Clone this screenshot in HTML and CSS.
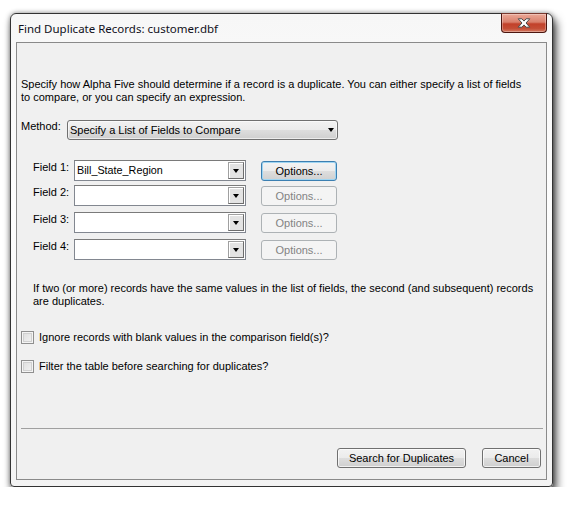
FILE: index.html
```html
<!DOCTYPE html>
<html>
<head>
<meta charset="utf-8">
<link rel="stylesheet" href="styles.css">
</head>
<body>
<div class="window">
  <div class="titlebar">
    <span class="title">Find Duplicate Records: customer.dbf</span>
    <div class="close">
      <svg width="14" height="10" viewBox="0 0 14 10"><path d="M1.2 0.8 H4.9 L7 3.1 L9.1 0.8 H12.8 L9 5 L12.8 9.2 H9.1 L7 6.9 L4.9 9.2 H1.2 L5 5 Z" fill="#ffffff" stroke="#4a4a4a" stroke-width="1" stroke-linejoin="round"/></svg>
    </div>
  </div>
  <div class="client">
    <p class="intro">Specify how Alpha Five should determine if a record is a duplicate. You can either specify a list of fields<br>to compare, or you can specify an expression.</p>
    <div class="method-row">
      <span class="mlbl">Method:</span>
      <div class="select"><span class="sval">Specify a List of Fields to Compare</span><span class="caret"></span></div>
    </div>
    <div class="fields">
      <div class="field-row r1">
        <span class="flbl">Field 1:</span>
        <div class="combo"><span class="val">Bill_State_Region</span><span class="cbtn"><span class="tri"></span></span></div>
        <div class="btn opt default">Options...</div>
      </div>
      <div class="field-row r2">
        <span class="flbl">Field 2:</span>
        <div class="combo"><span class="val"></span><span class="cbtn"><span class="tri"></span></span></div>
        <div class="btn opt disabled">Options...</div>
      </div>
      <div class="field-row r3">
        <span class="flbl">Field 3:</span>
        <div class="combo"><span class="val"></span><span class="cbtn"><span class="tri"></span></span></div>
        <div class="btn opt disabled">Options...</div>
      </div>
      <div class="field-row r4">
        <span class="flbl">Field 4:</span>
        <div class="combo"><span class="val"></span><span class="cbtn"><span class="tri"></span></span></div>
        <div class="btn opt disabled">Options...</div>
      </div>
    </div>
    <p class="note">If two (or more) records have the same values in the list of fields, the second (and subsequent) records<br>are duplicates.</p>
    <div class="check c1"><span class="box"></span><span>Ignore records with blank values in the comparison field(s)?</span></div>
    <div class="check c2"><span class="box"></span><span>Filter the table before searching for duplicates?</span></div>
    <div class="sep"></div>
    <div class="actions">
      <div class="btn search">Search for Duplicates</div>
      <div class="btn cancel">Cancel</div>
    </div>
  </div>
</div>
</body>
</html>
```
FILE: styles.css
```css
* { box-sizing: border-box; }
html, body { margin: 0; padding: 0; background: #ffffff; }
body {
  font-family: "Liberation Sans", Arial, sans-serif;
  font-size: 11px;
  color: #000;
  padding: 13px 0 0 10px;
}
.window {
  width: 543px;
  height: 474px;
  border: 1px solid #333333;
  border-radius: 6px 6px 4px 4px;
  background: linear-gradient(180deg, #f7f7f7 0%, #fdfdfd 40%, #f3f3f3 100%);
  box-shadow: 3px 6px 10px rgba(0,0,0,0.75), 0 0 5px rgba(0,0,0,0.4);
  padding: 0 5px 6px 5px;
  display: flex;
  flex-direction: column;
}
.titlebar {
  height: 28px;
  display: flex;
  justify-content: space-between;
  align-items: flex-start;
}
.title {
  font-family: "Noto Sans", "Open Sans", sans-serif;
  font-size: 11.5px;
  color: #101020;
  margin: 7px 0 0 2px;
}
.close {
  width: 46px;
  height: 20px;
  margin-top: -1px;
  border: 1px solid #4b1610;
  border-top-color: #7a3a30;
  border-radius: 0 0 4px 4px;
  background: linear-gradient(180deg, #eba897 0%, #d9806c 45%, #c2412a 55%, #c44d35 80%, #d47a62 100%);
  box-shadow: inset 0 0 0 1px rgba(255,255,255,0.3);
  display: flex;
  align-items: center;
  justify-content: center;
}
.close svg { display: block; }
.client {
  flex: 1;
  border: 1px solid #8a8a8a;
  background: #f0f0f0;
  display: flex;
  flex-direction: column;
}
p { margin: 0; }
.intro {
  margin: 35px 0 0 4px;
  line-height: 13px;
}
.method-row {
  display: flex;
  margin: 16px 0 0 4px;
  height: 20px;
}
.mlbl { width: 46px; line-height: 13px; }
.select {
  width: 271px;
  height: 20px;
  border: 1px solid #707070;
  border-radius: 3px;
  background: linear-gradient(180deg, #f2f2f2 0%, #ebebeb 50%, #dddddd 51%, #cfcfcf 100%);
  box-shadow: inset 0 0 0 1px rgba(255,255,255,0.6);
  display: flex;
  align-items: center;
  justify-content: space-between;
  padding: 0 3px 0 2px;
  line-height: 18px;
}
.caret {
  width: 0; height: 0;
  border-left: 3.5px solid transparent;
  border-right: 3.5px solid transparent;
  border-top: 4px solid #000;
}
.fields { display: flex; flex-direction: column; margin-top: 20px; }
.field-row { display: flex; height: 21px; margin-left: 16px; }
.r2 { margin-top: 4px; }
.r3 { margin-top: 6px; }
.r4 { margin-top: 6px; }
.flbl { width: 41px; line-height: 13px; margin-top: 1px; }
.combo {
  width: 172px;
  height: 21px;
  border: 1px solid #828790;
  border-top-color: #7a7a7a;
  background: #fff;
  display: flex;
  justify-content: space-between;
  padding: 1px;
}
.val { line-height: 17px; padding-left: 1px; font-size: 10.8px; }
.cbtn {
  width: 16px;
  height: 17px;
  background: #e3e3e3;
  border: 1px solid;
  border-color: #a0a0a0 #6d6d6d #6d6d6d #a0a0a0;
  box-shadow: inset 1px 1px 0 #ffffff;
  display: flex;
  align-items: center;
  justify-content: center;
}
.tri {
  width: 0; height: 0;
  border-left: 3.5px solid transparent;
  border-right: 3.5px solid transparent;
  border-top: 4px solid #000;
  margin-top: 1px;
}
.btn {
  height: 20px;
  border: 1px solid #707070;
  border-radius: 3px;
  background: linear-gradient(180deg, #f2f2f2 0%, #ebebeb 50%, #dddddd 51%, #cfcfcf 100%);
  box-shadow: inset 0 0 0 1px rgba(255,255,255,0.7);
  display: flex;
  align-items: center;
  justify-content: center;
  line-height: 18px;
}
.opt { width: 76px; margin-left: 15px; margin-top: 1px; height: 20px; }
.default {
  border-color: #3c7fb1;
  background: linear-gradient(180deg, #f3f3f3 0%, #ececec 50%, #dedede 51%, #d0d0d0 100%);
  box-shadow: inset 0 0 0 1px #9fd5f2;
}
.disabled {
  border-color: #adb2b5;
  background: #f4f4f4;
  box-shadow: none;
  color: #838383;
}
.note {
  margin: 22px 0 0 16px;
  line-height: 13px;
}
.check {
  display: flex;
  align-items: center;
  margin-left: 4px;
  height: 13px;
  line-height: 13px;
}
.c1 { margin-top: 23px; }
.c2 { margin-top: 16px; }
.box {
  width: 13px;
  height: 13px;
  border: 1px solid #8f8f8f;
  background: linear-gradient(135deg, #dcdcdc 0%, #f4f4f4 100%);
  box-shadow: inset 0 0 0 1px #f4f4f4, inset 0 0 0 2px #d0d0d0;
  margin-right: 5px;
}
.sep {
  height: 1px;
  background: #a0a0a0;
  margin: 55px 3px 0 4px;
}
.actions {
  display: flex;
  justify-content: flex-end;
  margin: 19px 5px 0 0;
}
.search { width: 129px; }
.cancel { width: 59px; margin-left: 16px; }
```
